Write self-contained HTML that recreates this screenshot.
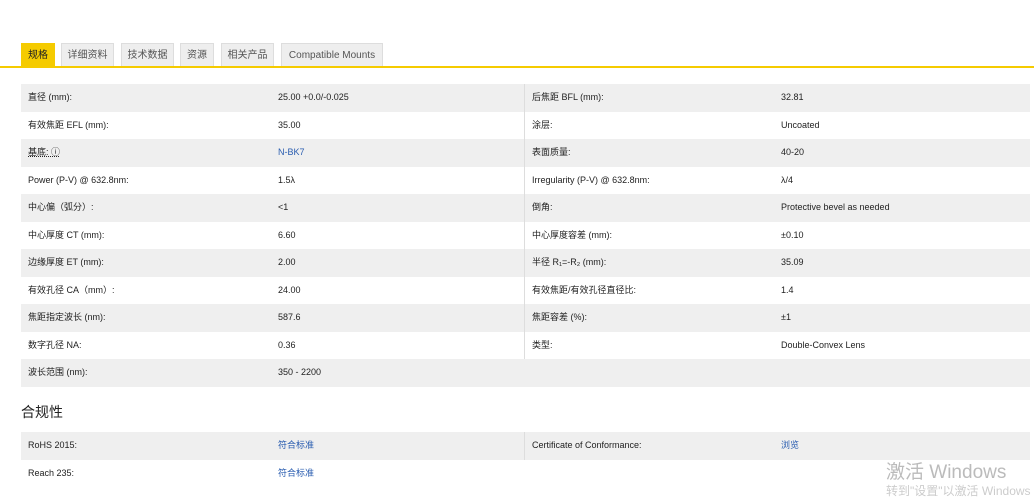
<!DOCTYPE html>
<html><head><meta charset="utf-8"><style>
body{margin:0;width:1034px;height:495px;overflow:hidden;background:#fff;font-family:"Liberation Sans","Noto Sans CJK SC",sans-serif;font-size:9px;color:#222;position:relative}
.tabs{position:absolute;top:43px;left:0;width:1034px;height:23px;border-bottom:2px solid #f5cb00}
.tab{position:absolute;top:0;height:23px;background:#eee;border:1px solid #ddd;border-bottom:none;box-sizing:border-box;font-size:10px;color:#555;line-height:23px;text-align:center}
.tab.a{background:#f5cb00;border-color:#f5cb00;color:#222}
.t{position:absolute;left:21px;width:1009px}
.r{position:relative;height:27.5px;line-height:27.5px;white-space:nowrap}
.r:nth-child(odd){background:#efefef}
.r span{position:absolute;top:0;height:27.5px}
.c1{left:7px}.c2{left:257px}.c3{left:511px}.c4{left:760px}
.r .d{left:503px;width:1px;background:#ddd}
.b{color:#2a5db0}
h3{position:absolute;left:21px;top:402px;margin:0;font-size:14px;font-weight:normal;color:#222}
.wm{position:absolute;left:886px;top:457px;font-size:19px;color:#bbb;white-space:nowrap}
.wm2{position:absolute;left:886px;top:482px;font-size:12px;color:#ccc;white-space:nowrap}
</style></head><body>
<div class="tabs">
<div class="tab a" style="left:21px;width:34px">规格</div>
<div class="tab" style="left:61px;width:53px">详细资料</div>
<div class="tab" style="left:121px;width:53px">技术数据</div>
<div class="tab" style="left:180px;width:34px">资源</div>
<div class="tab" style="left:221px;width:53px">相关产品</div>
<div class="tab" style="left:281px;width:102px">Compatible Mounts</div>
</div>
<div class="t" style="top:84px">
<div class="r"><span class="c1">直径 (mm):</span><span class="c2">25.00 +0.0/-0.025</span><span class="d"></span><span class="c3">后焦距 BFL (mm):</span><span class="c4">32.81</span></div>
<div class="r"><span class="c1">有效焦距 EFL (mm):</span><span class="c2">35.00</span><span class="d"></span><span class="c3">涂层:</span><span class="c4">Uncoated</span></div>
<div class="r"><span class="c1"><u style="text-decoration:underline dotted">基底: ⓘ</u></span><span class="c2 b">N-BK7</span><span class="d"></span><span class="c3">表面质量:</span><span class="c4">40-20</span></div>
<div class="r"><span class="c1">Power (P-V) @ 632.8nm:</span><span class="c2">1.5λ</span><span class="d"></span><span class="c3">Irregularity (P-V) @ 632.8nm:</span><span class="c4">λ/4</span></div>
<div class="r"><span class="c1">中心偏（弧分）:</span><span class="c2">&lt;1</span><span class="d"></span><span class="c3">倒角:</span><span class="c4">Protective bevel as needed</span></div>
<div class="r"><span class="c1">中心厚度 CT (mm):</span><span class="c2">6.60</span><span class="d"></span><span class="c3">中心厚度容差 (mm):</span><span class="c4">±0.10</span></div>
<div class="r"><span class="c1">边缘厚度 ET (mm):</span><span class="c2">2.00</span><span class="d"></span><span class="c3">半径 R₁=-R₂ (mm):</span><span class="c4">35.09</span></div>
<div class="r"><span class="c1">有效孔径 CA（mm）:</span><span class="c2">24.00</span><span class="d"></span><span class="c3">有效焦距/有效孔径直径比:</span><span class="c4">1.4</span></div>
<div class="r"><span class="c1">焦距指定波长 (nm):</span><span class="c2">587.6</span><span class="d"></span><span class="c3">焦距容差 (%):</span><span class="c4">±1</span></div>
<div class="r"><span class="c1">数字孔径 NA:</span><span class="c2">0.36</span><span class="d"></span><span class="c3">类型:</span><span class="c4">Double-Convex Lens</span></div>
<div class="r"><span class="c1">波长范围 (nm):</span><span class="c2">350 - 2200</span></div>
</div>
<h3>合规性</h3>
<div class="t" style="top:432px">
<div class="r"><span class="c1">RoHS 2015:</span><span class="c2 b">符合标准</span><span class="d"></span><span class="c3">Certificate of Conformance:</span><span class="c4 b">浏览</span></div>
<div class="r"><span class="c1">Reach 235:</span><span class="c2 b">符合标准</span></div>
</div>
<div class="wm">激活 Windows</div>
<div class="wm2">转到"设置"以激活 Windows</div>
</body></html>
